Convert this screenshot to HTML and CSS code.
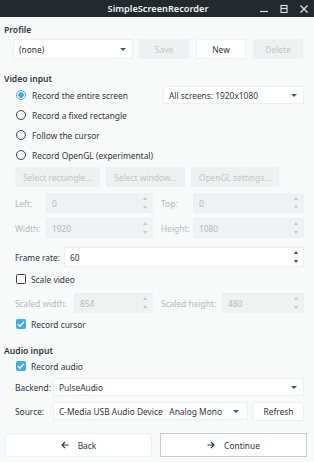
FILE: index.html
```html
<!DOCTYPE html>
<html lang="en">
<head>
  <meta charset="UTF-8">
  <title>SimpleScreenRecorder</title>
  <link rel="stylesheet" href="styles.css">
</head>
<body>

  <header class="titlebar">
    <span class="title">SimpleScreenRecorder</span>
    <div class="win-controls">
      <svg width="10" height="10" viewBox="0 0 10 10"><path d="M1 7.5h8" stroke="#d8dadc" stroke-width="1.2"/></svg>
      <svg width="10" height="10" viewBox="0 0 10 10"><rect x="2" y="1.5" width="6" height="7" fill="none" stroke="#d8dadc" stroke-width="1.2"/><path d="M2 4.5h6" stroke="#d8dadc" stroke-width="1.2"/></svg>
      <svg width="10" height="10" viewBox="0 0 10 10"><path d="M1.5 1.5l7 7M8.5 1.5l-7 7" stroke="#d8dadc" stroke-width="1.4"/></svg>
    </div>
  </header>

  <main class="window">
    <h2 class="group-title">Profile</h2>
    <div class="row profile-row">
      <div class="field combo profile-combo"><span>(none)</span><span class="caret"></span></div>
      <button class="btn" disabled>Save</button>
      <button class="btn">New</button>
      <button class="btn" disabled>Delete</button>
    </div>

    <h2 class="group-title video-title">Video input</h2>
    <div class="indent">
      <div class="row option-row">
        <label class="radio checked">Record the entire screen</label>
        <div class="field combo screens-combo"><span>All screens: 1920x1080</span><span class="caret"></span></div>
      </div>
      <div class="row option-row"><label class="radio">Record a fixed rectangle</label></div>
      <div class="row option-row"><label class="radio">Follow the cursor</label></div>
      <div class="row option-row"><label class="radio">Record OpenGL (experimental)</label></div>

      <div class="row select-row">
        <button class="btn btn-rect" disabled>Select rectangle...</button>
        <button class="btn btn-window" disabled>Select window...</button>
        <button class="btn btn-gl" disabled>OpenGL settings...</button>
      </div>

      <div class="row spin-row">
        <span class="lbl disabled lbl-left">Left:</span>
        <div class="field spin disabled half-spin"><span>0</span><span class="arrows"></span></div>
        <span class="lbl disabled lbl-top">Top:</span>
        <div class="field spin disabled grow"><span>0</span><span class="arrows"></span></div>
      </div>
      <div class="row spin-row second">
        <span class="lbl disabled lbl-left">Width:</span>
        <div class="field spin disabled half-spin"><span>1920</span><span class="arrows"></span></div>
        <span class="lbl disabled lbl-top">Height:</span>
        <div class="field spin disabled grow"><span>1080</span><span class="arrows"></span></div>
      </div>

      <div class="row spin-row framerate">
        <span class="lbl lbl-fps">Frame rate:</span>
        <div class="field spin grow"><span>60</span><span class="arrows dark"></span></div>
      </div>

      <div class="row check-row scale-row"><label class="check">Scale video</label></div>

      <div class="row spin-row scaled">
        <span class="lbl disabled lbl-sw">Scaled width:</span>
        <div class="field spin disabled sw-spin"><span>854</span><span class="arrows"></span></div>
        <span class="lbl disabled lbl-sh">Scaled height:</span>
        <div class="field spin disabled grow"><span>480</span><span class="arrows"></span></div>
      </div>

      <div class="row check-row"><label class="check checked">Record cursor</label></div>
    </div>

    <h2 class="group-title audio-title">Audio input</h2>
    <div class="indent">
      <div class="row check-row audio-check"><label class="check checked">Record audio</label></div>
      <div class="row combo-row backend">
        <span class="lbl lbl-audio">Backend:</span>
        <div class="field combo grow"><span>PulseAudio</span><span class="caret"></span></div>
      </div>
      <div class="row combo-row source">
        <span class="lbl lbl-audio">Source:</span>
        <div class="field combo grow"><span>C-Media USB Audio Device&nbsp;&nbsp; Analog Mono</span><span class="caret"></span></div>
        <button class="btn btn-refresh">Refresh</button>
      </div>
    </div>

    <div class="row nav-row">
      <button class="btn nav-btn">
        <svg class="arrow" width="8" height="8" viewBox="0 0 8 8"><path d="M7.5 4H1M4 1L1 4l3 3" fill="none" stroke="#31363b" stroke-width="1.1"/></svg>Back
      </button>
      <button class="btn nav-btn default">
        <svg class="arrow" width="8" height="8" viewBox="0 0 8 8"><path d="M0.5 4H7M4 1l3 3-3 3" fill="none" stroke="#31363b" stroke-width="1.1"/></svg>Continue
      </button>
    </div>
  </main>

</body>
</html>
```

FILE: styles.css
```css
html, body {
  margin: 0;
  padding: 0;
}
body {
  width: 314px;
  height: 462px;
  overflow: hidden;
  background: #f8f9f9;
  font-family: 'Noto Sans', 'Open Sans', sans-serif;
  font-size: 8.4px;
  color: #31363b;
}
.titlebar {
  height: 17px;
  background: #232a2e;
  display: flex;
  align-items: center;
  justify-content: center;
  position: relative;
}
.title {
  color: #eff0f1;
  font-weight: 600;
  font-size: 9.2px;
  margin-left: 2px;
}
.win-controls {
  position: absolute;
  right: 5px;
  top: 4px;
  display: flex;
  gap: 10px;
}
.window {
  padding: 0 10px 0 4px;
}
.row {
  display: flex;
  align-items: center;
}
.group-title {
  margin: 0;
  font-size: 8.6px;
  font-weight: 600;
  height: 14px;
  line-height: 14px;
  padding-top: 6px;
}
.video-title {
  padding-top: 13px;
}
.audio-title {
  padding-top: 11px;
}
.indent {
  padding-left: 11px;
}
.field {
  height: 20px;
  box-sizing: border-box;
  background: #ffffff;
  border: 1px solid #eceeef;
  display: flex;
  align-items: center;
  justify-content: space-between;
  padding: 0 6px 0 5px;
  position: relative;
  white-space: nowrap;
}
.field.disabled {
  background: #f0f1f2;
  border-color: #eeeff0;
  color: #b6babd;
}
.grow {
  flex: 1;
}
.caret {
  width: 0;
  height: 0;
  border-left: 3px solid transparent;
  border-right: 3px solid transparent;
  border-top: 3px solid #4d5357;
}
.arrows {
  position: absolute;
  right: 4px;
  top: 2px;
  bottom: 2px;
  width: 5px;
}
.arrows::before,
.arrows::after {
  content: "";
  position: absolute;
  left: 0;
  border-left: 2.5px solid transparent;
  border-right: 2.5px solid transparent;
}
.arrows::before {
  top: 1px;
  border-bottom: 3px solid #c4c7ca;
}
.arrows::after {
  bottom: 1px;
  border-top: 3px solid #c4c7ca;
}
.arrows.dark::before {
  border-bottom-color: #3b4045;
}
.arrows.dark::after {
  border-top-color: #3b4045;
}
.btn {
  height: 20px;
  box-sizing: border-box;
  font-family: inherit;
  font-size: 8.4px;
  color: #31363b;
  background: #ffffff;
  border: 1px solid #eff0f1;
  padding: 0;
  margin: 0;
  white-space: nowrap;
}
.btn:disabled {
  background: #eff0f1;
  color: #c3c6c9;
}

/* profile */
.profile-row {
  margin-top: 2px;
  padding-left: 9px;
}
.profile-combo {
  width: 120px;
}
.profile-row .btn {
  width: 50px;
  margin-left: 7px;
}
.profile-row .btn:nth-child(2) {
  margin-left: 6px;
}

/* radio options */
.option-row {
  height: 20px;
}
.option-row:first-child {
  margin-top: -1px;
}
.radio, .check {
  display: flex;
  align-items: center;
  white-space: nowrap;
}
.radio::before {
  content: "";
  width: 10px;
  height: 10px;
  box-sizing: border-box;
  border: 1.5px solid #3a3f44;
  border-radius: 50%;
  margin: 0 6px 0 1px;
}
.radio.checked::before {
  border-color: #3daee9;
  background: radial-gradient(circle, #3daee9 0 2.6px, #ffffff 3px);
}
.screens-combo {
  width: 141px;
  height: 18px;
  margin-left: auto;
}

/* buttons row */
.select-row {
  margin-top: 2px;
  gap: 6px;
}
.btn-rect { width: 85px; }
.btn-window { width: 79px; }
.btn-gl { width: 88px; }

/* spin rows */
.spin-row {
  margin-top: 6px;
}
.spin-row.second {
  margin-top: 5px;
}
.spin-row.framerate {
  margin-top: 9px;
}
.lbl {
  white-space: nowrap;
}
.lbl.disabled {
  color: #b6babd;
}
.lbl-left { width: 31px; }
.half-spin { width: 107px; }
.lbl-top { width: 32px; margin-left: 8px; }
.lbl-fps { width: 49px; }
.lbl-sw { width: 59px; }
.sw-spin { width: 79px; }
.lbl-sh { width: 61px; margin-left: 8px; }

/* checkboxes */
.check-row {
  height: 18px;
  margin-top: 2px;
}
.scale-row {
  margin-top: 3px;
}
.check::before {
  content: "";
  width: 10px;
  height: 10px;
  box-sizing: border-box;
  border: 1.5px solid #3a3f44;
  border-radius: 1.5px;
  margin: 0 5px 0 1px;
}
.check.checked::before {
  border-color: #3daee9;
  background: #3daee9 url("data:image/svg+xml,%3Csvg xmlns='http://www.w3.org/2000/svg' viewBox='0 0 10 10'%3E%3Cpath d='M2 5.2l2 2 4-4.4' fill='none' stroke='white' stroke-width='1.5'/%3E%3C/svg%3E") center / 10px 10px no-repeat;
}
.spin-row.scaled {
  margin-top: 5px;
}
.audio-check {
  margin-top: -1px;
}

/* audio */
.combo-row {
  height: 18px;
}
.combo-row .field {
  height: 18px;
}
.backend {
  margin-top: 3px;
}
.source {
  margin-top: 6px;
}
.lbl-audio { width: 38px; }
.source .field {
  padding-right: 8px;
}
.btn-refresh {
  width: 51px;
  height: 19px;
  margin-left: 5px;
}

/* navigation */
.nav-row {
  margin-top: 13px;
  margin-right: -3px;
  margin-left: 1px;
  gap: 8px;
}
.nav-btn {
  flex: 1;
  height: 24px;
  display: flex;
  align-items: center;
  justify-content: center;
}
.nav-btn.default {
  border: 1px solid #c9cccf;
}
.arrow {
  margin-right: 9px;
}
```
